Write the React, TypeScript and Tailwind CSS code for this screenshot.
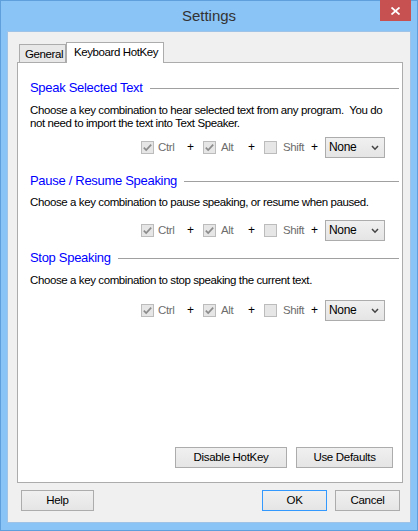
import React from "react";

function CheckBox({ checked }: { checked: boolean }) {
  return (
    <div className="w-[13px] h-[13px] border border-[#bcbcbc] bg-[#e6e6e6] shrink-0 flex items-center justify-center">
      {checked && (
        <svg width="11" height="11" viewBox="0 0 11 11">
          <polyline points="1.8,5.6 4.2,8 9.2,2.6" fill="none" stroke="#8c8c8c" strokeWidth="1.7" />
        </svg>
      )}
    </div>
  );
}

function Plus() {
  return <span className="w-[7px] text-center text-[12px] leading-[13px] text-black shrink-0">+</span>;
}

function KeyRow({ className }: { className: string }) {
  return (
    <div className={"flex items-center h-[21px] ml-[111px] " + className}>
      <CheckBox checked />
      <span className="ml-[4px] w-[29px] text-[11.5px] tracking-[-0.4px] leading-[13px] text-[#6d6d6d]">Ctrl</span>
      <Plus />
      <div className="ml-[9px]"><CheckBox checked /></div>
      <span className="ml-[5px] w-[27px] text-[11.5px] tracking-[-0.4px] leading-[13px] text-[#6d6d6d]">Alt</span>
      <Plus />
      <div className="ml-[9px]"><CheckBox checked={false} /></div>
      <span className="ml-[6px] w-[28px] text-[11.5px] tracking-[-0.4px] leading-[13px] text-[#6d6d6d]">Shift</span>
      <Plus />
      <div className="ml-[7px] w-[60px] h-[21px] border border-[#acacac] bg-gradient-to-b from-[#f0f0f0] to-[#e5e5e5] flex items-center pl-[3px] pr-[5px]">
        <span className="flex-1 text-[12px] tracking-[-0.3px] leading-[13px] text-black">None</span>
        <svg width="8" height="6" viewBox="0 0 8 6">
          <polyline points="1,1 4,4.2 7,1" fill="none" stroke="#444" strokeWidth="1.5" />
        </svg>
      </div>
    </div>
  );
}

function Heading({ text, className }: { text: string; className: string }) {
  return (
    <div className={"flex items-center h-[16px] " + className}>
      <span className="text-[13px] tracking-[-0.3px] leading-[16px] text-[#0000ff] whitespace-nowrap">{text}</span>
      <div className="flex-1 h-px bg-[#a0a0a0] ml-[7px]" />
    </div>
  );
}

function Btn({ label, className }: { label: string; className: string }) {
  return (
    <div
      className={
        "h-[21px] border bg-gradient-to-b from-[#f0f0f0] to-[#e5e5e5] flex items-center justify-center text-[11.5px] tracking-[-0.3px] leading-[13px] text-black " +
        className
      }
    >
      {label}
    </div>
  );
}

export default function App() {
  return (
    <div className="w-[418px] h-[531px] bg-[#8ac3f5] border border-[#5f9fdc] flex flex-col font-['Liberation_Sans',Arial,sans-serif] text-black select-none">
      <div className="relative h-[30px] shrink-0 flex items-start justify-center">
        <span className="text-[15px] leading-[20px] text-[#333333] mt-[5px]">Settings</span>
        <div className="absolute right-[6px] top-[-1px] w-[31px] h-[21px] bg-[#c75050] flex items-center justify-center">
          <svg width="9" height="8" viewBox="0 0 9 8">
            <line x1="0.5" y1="0.5" x2="8.5" y2="7.5" stroke="white" strokeWidth="1.8" />
            <line x1="8.5" y1="0.5" x2="0.5" y2="7.5" stroke="white" strokeWidth="1.8" />
          </svg>
        </div>
      </div>

      <div className="mx-[6px] mb-[7px] flex-1 bg-[#f0f0f0] border border-[#9fc3e6] flex flex-col pt-[10px] pl-[9px] pr-[7px] pb-[11px]">
        <div className="flex items-end h-[20px] pl-[2px] relative z-10">
          <div className="w-[47px] h-[18px] border border-b-0 border-[#acacac] bg-[#e8e8e8] pl-[5px] text-[11.5px] tracking-[-0.4px] leading-[16px] pt-[1px] whitespace-nowrap">
            General
          </div>
          <div className="w-[98px] h-[21px] -mb-px border border-b-0 border-[#acacac] bg-white pl-[7px] text-[11.5px] tracking-[-0.4px] leading-[16px] pt-[1px] whitespace-nowrap">
            Keyboard HotKey
          </div>
        </div>

        <div className="flex-1 bg-white border border-[#acacac] flex flex-col pl-[12px] pr-[3px] pt-[17px] pb-[14px]">
          <Heading text="Speak Selected Text" className="" />
          <div className="mt-[8px] text-[11.5px] tracking-[-0.4px] leading-[13px] whitespace-pre">
            {"Choose a key combination to hear selected text from any program.  You do\nnot need to import the text into Text Speaker."}
          </div>
          <KeyRow className="mt-[7px]" />

          <Heading text="Pause / Resume Speaking" className="mt-[15px]" />
          <div className="mt-[7px] text-[11.5px] tracking-[-0.4px] leading-[13px] whitespace-pre">
            Choose a key combination to pause speaking, or resume when paused.
          </div>
          <KeyRow className="mt-[11px]" />

          <Heading text="Stop Speaking" className="mt-[9px]" />
          <div className="mt-[8px] text-[11.5px] tracking-[-0.4px] leading-[13px] whitespace-pre">
            Choose a key combination to stop speaking the current text.
          </div>
          <KeyRow className="mt-[13px]" />

          <div className="mt-auto flex justify-end mr-[6px]">
            <Btn label="Disable HotKey" className="w-[112px] border-[#acacac]" />
            <Btn label="Use Defaults" className="w-[97px] ml-[9px] border-[#acacac]" />
          </div>
        </div>

        <div className="mt-[7px] flex items-center">
          <Btn label="Help" className="w-[73px] ml-[4px] border-[#acacac]" />
          <div className="flex-1" />
          <Btn label="OK" className="w-[65px] border-[#3399ff]" />
          <Btn label="Cancel" className="w-[65px] ml-[8px] mr-[3px] border-[#acacac]" />
        </div>
      </div>
    </div>
  );
}
